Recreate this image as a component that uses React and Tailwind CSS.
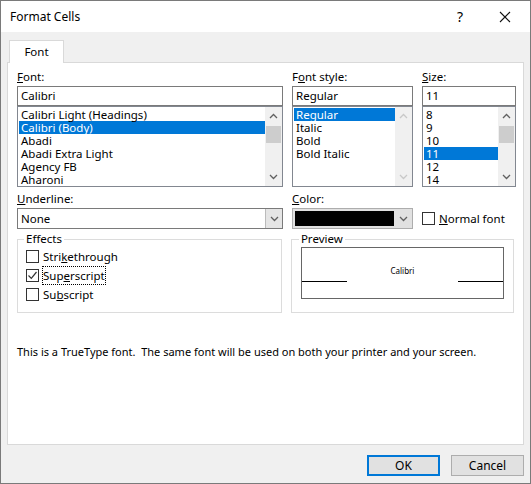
import React from "react";

const F = { fontFamily: '"Noto Sans", "Open Sans", sans-serif' };

function Chev({ up, color = "#606060" }) {
  return (
    <svg width="9" height="6" viewBox="0 0 9 6">
      <path d={up ? "M1 5 L4.5 1.5 L8 5" : "M1 1 L4.5 4.5 L8 1"} fill="none" stroke={color} strokeWidth="1.3" />
    </svg>
  );
}

function Scroll({ thumbTop, disabled }) {
  const c = disabled ? "#c8c8c8" : "#606060";
  return (
    <div className="w-[17px] bg-[#f0f0f0] flex flex-col items-center justify-between py-[6px] relative">
      <Chev up color={c} />
      {!disabled && <div className="absolute left-[1px] w-[15px] h-[17px] bg-[#cdcdcd]" style={{ top: thumbTop }} />}
      <Chev color={c} />
    </div>
  );
}

function List({ w, items, sel, thumbTop, disabled }) {
  return (
    <div className="flex border border-[#828790] bg-white h-[81px] overflow-hidden" style={{ width: w }}>
      <div className="flex-1 pt-[1px] pl-[1px] leading-[13px] text-[11.5px]">
        {items.map((t, i) => (
          <div key={t} className={`px-[2px] h-[13px] whitespace-nowrap ${i === sel ? "bg-[#0078d7] text-white" : ""}`}>{t}</div>
        ))}
      </div>
      <Scroll thumbTop={thumbTop} disabled={disabled} />
    </div>
  );
}

function Input({ w, v }) {
  return (
    <div className="h-[20px] border border-[#7a7a7a] bg-white px-[3px] text-[11.5px] leading-[18px]" style={{ width: w }}>{v}</div>
  );
}

function Check({ checked, label, dotted }) {
  const [a, b, c] = label;
  return (
    <div className="flex items-center gap-[4px] h-[19px]">
      <div className="w-[13px] h-[13px] border border-[#333] bg-white flex items-center justify-center shrink-0">
        {checked && (
          <svg width="11" height="11" viewBox="0 0 11 11"><path d="M1.5 5.5 L4.3 8.3 L9.5 2" fill="none" stroke="#333" strokeWidth="1.2" /></svg>
        )}
      </div>
      <span className={`text-[11.5px] whitespace-nowrap ${dotted ? "outline outline-1 outline-dotted outline-black" : ""}`}>
        {a}<u>{b}</u>{c}
      </span>
    </div>
  );
}

export default function App() {
  return (
    <div style={F} className="w-[531px] h-[484px] bg-[#f0f0f0] border border-[#7a7a7a] flex flex-col text-black text-[11.5px]">
      <div className="h-[31px] bg-white flex items-center pl-[9px] shrink-0">
        <span className="text-[12px] flex-1">Format Cells</span>
        <span className="w-[40px] text-center text-[14px]">?</span>
        <span className="w-[50px] flex justify-center">
          <svg width="12" height="12" viewBox="0 0 12 12"><path d="M1 1 L11 11 M11 1 L1 11" stroke="#111" strokeWidth="1.1" /></svg>
        </span>
      </div>
      <div className="px-[6px] pt-[7px]">
        <div className="w-[55px] h-[23px] ml-[2px] bg-white border border-b-0 border-[#d9d9d9] text-center leading-[22px] relative top-[1px]">Font</div>
        <div className="h-[383px] bg-white border border-[#d9d9d9] px-[9px] pt-[7px]">
          <div className="flex gap-[9px]">
            <div className="w-[266px]">
              <div className="h-[16px] leading-[14px]"><u>F</u>ont:</div>
              <Input w={266} v="Calibri" />
              <List w={266} sel={1} thumbTop={19} items={["Calibri Light (Headings)", "Calibri (Body)", "Abadi", "Abadi Extra Light", "Agency FB", "Aharoni"]} />
            </div>
            <div className="w-[121px]">
              <div className="h-[16px] leading-[14px]">F<u>o</u>nt style:</div>
              <Input w={121} v="Regular" />
              <List w={121} sel={0} disabled items={["Regular", "Italic", "Bold", "Bold Italic"]} />
            </div>
            <div className="w-[94px]">
              <div className="h-[16px] leading-[14px]"><u>S</u>ize:</div>
              <Input w={94} v="11" />
              <List w={94} sel={3} thumbTop={19} items={["8", "9", "10", "11", "12", "14"]} />
            </div>
          </div>
          <div className="flex gap-[9px] mt-[5px]">
            <div className="w-[266px]">
              <div className="h-[16px] leading-[14px]"><u>U</u>nderline:</div>
              <div className="h-[21px] border border-[#7a7a7a] bg-white flex">
                <div className="flex-1 px-[3px] leading-[19px]">None</div>
                <div className="w-[17px] bg-[#e5e5e5] border-l border-[#bbb] flex items-center justify-center"><Chev /></div>
              </div>
            </div>
            <div className="w-[121px]">
              <div className="h-[16px] leading-[14px]"><u>C</u>olor:</div>
              <div className="h-[21px] border border-[#adadad] bg-[#e1e1e1] flex p-[2px] gap-[2px]">
                <div className="flex-1 bg-black" />
                <div className="w-[14px] flex items-center justify-center"><Chev /></div>
              </div>
            </div>
            <div className="pt-[17px]">
              <Check label={["", "N", "ormal font"]} />
            </div>
          </div>
          <div className="flex gap-[9px] mt-[3px]">
            <fieldset className="w-[266px] h-[81px] border border-[#dcdcdc] px-[8px] pt-[1px]">
              <legend className="px-[2px] -ml-[2px] leading-[14px]">Effects</legend>
              <Check label={["Stri", "k", "ethrough"]} />
              <Check checked dotted label={["Sup", "e", "rscript"]} />
              <Check label={["Su", "b", "script"]} />
            </fieldset>
            <fieldset className="w-[224px] h-[81px] border border-[#dcdcdc] px-[9px] pt-[1px]">
              <legend className="px-[2px] -ml-[2px] leading-[14px]">Preview</legend>
              <div className="h-[52px] border border-[#666] relative flex items-center justify-center">
                <span className="text-[8px] -mt-[4px]">Calibri</span>
                <div className="absolute left-0 top-[33px] w-[45px] border-t border-black" />
                <div className="absolute right-0 top-[33px] w-[45px] border-t border-black" />
              </div>
            </fieldset>
          </div>
          <div className="mt-[31px] text-[11px] whitespace-nowrap">This is a TrueType font.&nbsp; The same font will be used on both your printer and your screen.</div>
        </div>
      </div>
      <div className="flex justify-end gap-[11px] pr-[6px] mt-[10px]">
        <button className="w-[73px] h-[21px] bg-[#e1e1e1] border-2 border-[#0078d7] text-[12px]">OK</button>
        <button className="w-[73px] h-[21px] bg-[#e1e1e1] border border-[#adadad] text-[12px]">Cancel</button>
      </div>
    </div>
  );
}
